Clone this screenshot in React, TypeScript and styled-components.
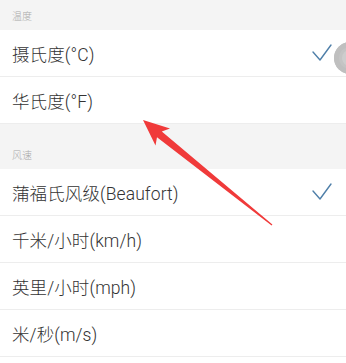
import * as React from 'react';
import styled, { createGlobalStyle } from 'styled-components';

const GlobalStyle = createGlobalStyle`
  html, body {
    margin: 0;
    padding: 0;
    background: #fff;
  }
  body {
    font-family: Roboto, "Noto Sans CJK SC", sans-serif;
  }
`;

const Page = styled.div`
  position: relative;
  width: 346px;
  height: 363px;
  overflow: hidden;
  background: #fff;
`;

const SectionHeader = styled.div<{ $height: number }>`
  display: flex;
  align-items: flex-end;
  height: ${(p) => p.$height}px;
  padding: 0 12px 7px;
  box-sizing: border-box;
  background: #f4f4f4;
  color: #a9a9a9;
  font-size: 10px;
  line-height: 12px;
  font-weight: 300;
`;

const Row = styled.div`
  display: flex;
  align-items: center;
  justify-content: space-between;
  height: 47px;
  padding: 0 12px;
  box-sizing: border-box;
  border-bottom: 1px solid #ededed;
  background: #fff;
`;

const Label = styled.span`
  color: #333;
  font-size: 17.5px;
  font-weight: 300;
  letter-spacing: 0.1px;
`;

const Check = styled.svg`
  width: 22px;
  height: 20px;
  margin-right: 1px;
`;

const FloatButton = styled.div`
  position: absolute;
  left: 334px;
  top: 42px;
  width: 32px;
  height: 32px;
  border-radius: 50%;
  background: #c4c4c4;
  box-shadow: inset 0 0 0 5px #bfbfbf;

  &::after {
    content: '';
    position: absolute;
    left: 8px;
    top: 8px;
    width: 16px;
    height: 16px;
    border-radius: 50%;
    background: #cdcdcd;
  }
`;

const Overlay = styled.svg`
  position: absolute;
  left: 0;
  top: 0;
  pointer-events: none;
`;

const CheckMark = () => (
  <Check viewBox="0 0 22 20">
    <polyline
      points="2,9 9,17 20,2"
      fill="none"
      stroke="#4f7fa9"
      strokeWidth="1.4"
      strokeLinecap="round"
      strokeLinejoin="round"
    />
  </Check>
);

interface Option {
  label: string;
  checked?: boolean;
}

const temperature: Option[] = [
  { label: '摄氏度(°C)', checked: true },
  { label: '华氏度(°F)' },
];

const wind: Option[] = [
  { label: '蒲福氏风级(Beaufort)', checked: true },
  { label: '千米/小时(km/h)' },
  { label: '英里/小时(mph)' },
  { label: '米/秒(m/s)' },
];

export default function App() {
  return (
    <Page>
      <GlobalStyle />
      <SectionHeader $height={30}>温度</SectionHeader>
      {temperature.map((o) => (
        <Row key={o.label}>
          <Label>{o.label}</Label>
          {o.checked && <CheckMark />}
        </Row>
      ))}
      <SectionHeader $height={45}>风速</SectionHeader>
      {wind.map((o) => (
        <Row key={o.label}>
          <Label>{o.label}</Label>
          {o.checked && <CheckMark />}
        </Row>
      ))}

      <FloatButton />

      <Overlay width="346" height="363" viewBox="0 0 346 363">
        <polygon
          points="143,120 170,128.5 161.8,131.6 272.4,224.5 271.6,225.5 157,137.2 155.5,145.5"
          fill="#f03a3a"
        />
      </Overlay>
    </Page>
  );
}
